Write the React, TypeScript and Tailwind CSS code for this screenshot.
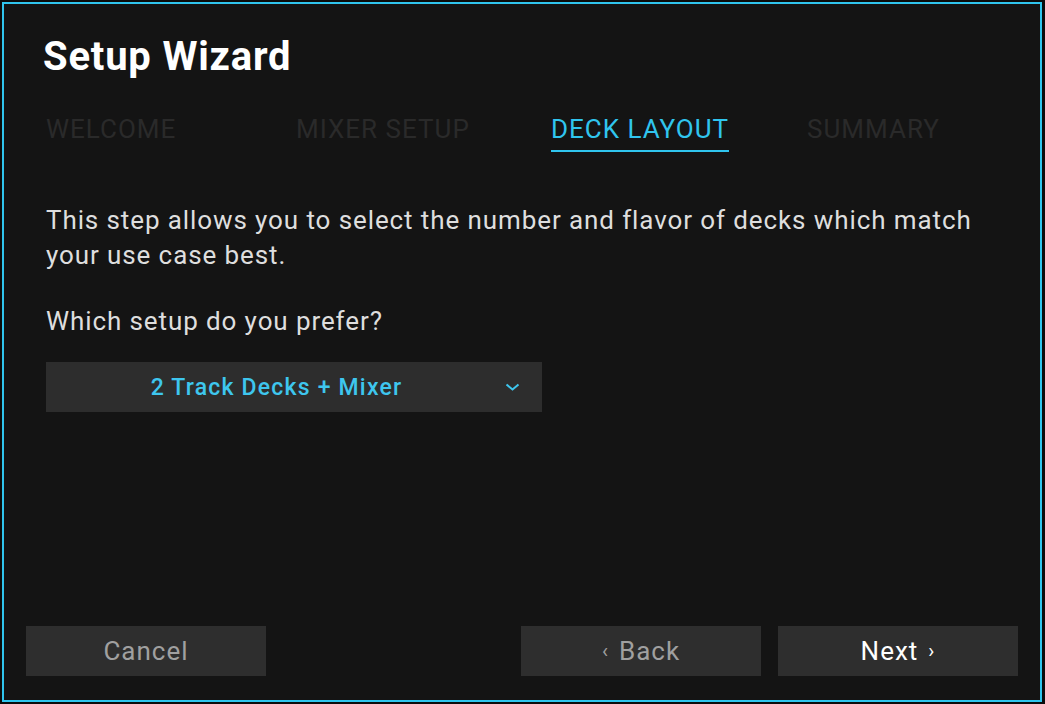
import React from 'react';

const steps = ['WELCOME', 'MIXER SETUP', 'DECK LAYOUT', 'SUMMARY'];
const stepWidths = ['w-[250px]', 'w-[255px]', 'w-[256px]', ''];
const activeStep = 2;

const App: React.FC = () => {
  return (
    <div className="w-[1045px] h-[704px] bg-[#0c0c0c] pt-[2px] pl-[2px] font-['Roboto',sans-serif]">
      <div className="w-[1040px] h-[700px] border-2 border-[#30c5ee] bg-[#141414] flex flex-col">
        <div className="pt-[33px] pl-[42px]">
          <h1 className="-ml-[3px] text-[40px] leading-[40px] font-bold tracking-[0.8px] text-white">Setup Wizard</h1>

          <div className="mt-[37px] flex items-start">
            {steps.map((step, i) => (
              <div key={step} className={`${stepWidths[i]} shrink-0`}>
                <span
                  className={
                    i === activeStep
                      ? 'inline-block text-[26px] leading-[30px] tracking-[1px] pb-[6px] border-b-2 border-[#30c5ee] text-[#30c5ee]'
                      : 'inline-block text-[26px] leading-[30px] tracking-[1px] pb-[6px] border-b-2 border-transparent text-[#2a2a2a]'
                  }
                >
                  {step}
                </span>
              </div>
            ))}
          </div>

          <p className="mt-[51px] w-[960px] text-[26px] leading-[35px] tracking-[0.9px] text-[#dedede]">
            This step allows you to select the number and flavor of decks which match your use case best.
          </p>

          <p className="mt-[31px] text-[26px] leading-[34px] tracking-[0.9px] text-[#dedede]">
            Which setup do you prefer?
          </p>

          <button className="mt-[24px] w-[496px] h-[50px] bg-[#2d2d2d] flex items-center pr-[22px]">
            <span className="flex-1 text-center mt-[3px] pl-[2px] text-[23px] font-medium tracking-[1.2px] text-[#3ec6ee]">
              2 Track Decks + Mixer
            </span>
            <svg width="15" height="8" viewBox="0 0 15 8" className="shrink-0">
              <polyline points="1.5,1.5 7.5,6.5 13.5,1.5" fill="none" stroke="#3ec6ee" strokeWidth="2" />
            </svg>
          </button>
        </div>

        <div className="mt-auto px-[22px] pb-[24px] flex items-center">
          <button className="w-[240px] h-[50px] bg-[#2e2e2e] text-[26px] tracking-[1px] text-[#a0a0a0]">Cancel</button>
          <div className="flex-1" />
          <button className="w-[240px] h-[50px] bg-[#2e2e2e] text-[26px] tracking-[1px] text-[#a0a0a0] flex items-center justify-center gap-[10px]">
            <span className="text-[20px]">‹</span>
            <span>Back</span>
          </button>
          <button className="ml-[17px] w-[240px] h-[50px] bg-[#2e2e2e] text-[26px] tracking-[1px] text-white flex items-center justify-center gap-[10px]">
            <span>Next</span>
            <span className="text-[20px]">›</span>
          </button>
        </div>
      </div>
    </div>
  );
};

export default App;
